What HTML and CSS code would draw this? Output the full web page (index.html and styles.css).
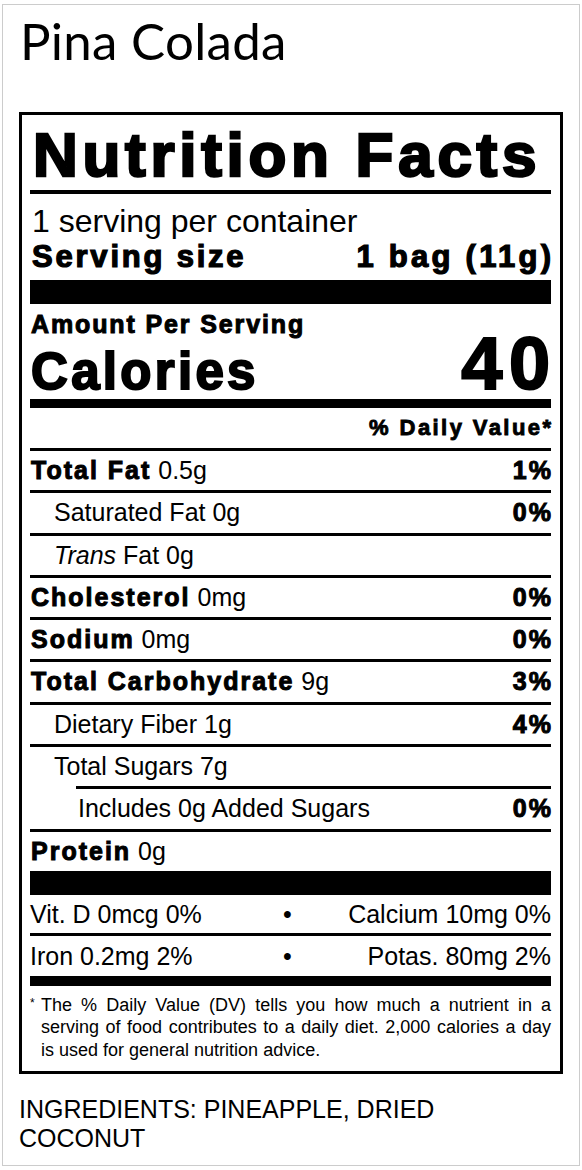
FILE: index.html
```html
<!DOCTYPE html>
<html lang="en">
<head>
    <meta charset="UTF-8">
    <meta name="viewport" content="width=device-width, initial-scale=1.0">
    <title>Pina Colada - Nutrition Facts</title>
    <link rel="stylesheet" href="styles.css">
</head>
<body>

    <div class="page">
        <h2 class="product-name">Pina Colada</h2>

        <div class="label">
            <h1 class="label-title hv">Nutrition Facts</h1>

            <div class="servings">
                <p class="servings-count">1 serving per container</p>
                <div class="serving-size hv">
                    <span>Serving size</span>
                    <span class="right">1 bag (11g)</span>
                </div>
            </div>

            <div class="calories-block">
                <p class="amount hv">Amount Per Serving</p>
                <div class="calories hv">
                    <span>Calories</span>
                    <span class="calories-value right">40</span>
                </div>
            </div>

            <div class="dv-header"><span class="hv right">% Daily Value*</span></div>

            <div class="row">
                <span><b class="hv">Total Fat</b> 0.5g</span>
                <b class="hv right">1%</b>
            </div>
            <div class="row sub">
                <span>Saturated Fat 0g</span>
                <b class="hv right">0%</b>
            </div>
            <div class="row sub">
                <span><i>Trans</i> Fat 0g</span>
            </div>
            <div class="row">
                <span><b class="hv">Cholesterol</b> 0mg</span>
                <b class="hv right">0%</b>
            </div>
            <div class="row">
                <span><b class="hv">Sodium</b> 0mg</span>
                <b class="hv right">0%</b>
            </div>
            <div class="row">
                <span><b class="hv">Total Carbohydrate</b> 9g</span>
                <b class="hv right">3%</b>
            </div>
            <div class="row sub">
                <span>Dietary Fiber 1g</span>
                <b class="hv right">4%</b>
            </div>
            <div class="row sub">
                <span>Total Sugars 7g</span>
            </div>
            <div class="row sub-2">
                <span>Includes 0g Added Sugars</span>
                <b class="hv right">0%</b>
            </div>
            <div class="row">
                <span><b class="hv">Protein</b> 0g</span>
            </div>

            <div class="bar-thick"></div>

            <div class="vit-row">
                <span>Vit. D 0mcg 0%</span>
                <span class="dot">•</span>
                <span class="vit-right">Calcium 10mg 0%</span>
            </div>
            <div class="vit-row iron">
                <span>Iron 0.2mg 2%</span>
                <span class="dot">•</span>
                <span class="vit-right">Potas. 80mg 2%</span>
            </div>

            <div class="bar-medium"></div>

            <div class="footnote">
                <span class="star">*</span>
                <p>The % Daily Value (DV) tells you how much a nutrient in a serving of food contributes to a daily diet. 2,000 calories a day is used for general nutrition advice.</p>
            </div>
        </div>

        <p class="ingredients">INGREDIENTS: PINEAPPLE, DRIED COCONUT</p>
    </div>

</body>
</html>
```

FILE: styles.css
```css
body {
    margin: 0;
    padding: 0;
    background-color: #fff;
    color: #000;
    font-family: "Liberation Sans", Arial, sans-serif;
}

.page {
    margin: 4px 2px 0;
    border: 1px solid #ccc;
    padding: 6px 16px 12px;
}

.product-name {
    font-family: Lato, sans-serif;
    font-weight: 400;
    font-size: 51px;
    line-height: 60px;
    letter-spacing: 0.3px;
    margin: 0 0 41px 1px;
}

/* the label itself */
.label {
    border: 3px solid #000;
    padding: 0 9px 0 8px;
}

/* heavy "black" text: bold + stroke + extra spacing */
.hv {
    font-weight: 700;
    -webkit-text-stroke: 0.04em #000;
    letter-spacing: 0.08em;
}

.hv.right,
.hv .right {
    margin-right: -0.08em;
}

.label-title {
    font-size: 62px;
    line-height: 70px;
    letter-spacing: 0.076em;
    margin: 0;
    padding: 5px 0 0 3px;
    border-bottom: 4px solid #000;
}

.servings {
    margin-top: 9px;
    padding-bottom: 5px;
    border-bottom: 24px solid #000;
}

.servings-count {
    margin: 0 0 0 2px;
    font-size: 32px;
    line-height: 36px;
}

.serving-size {
    display: flex;
    justify-content: space-between;
    padding-left: 2px;
    font-size: 31px;
    line-height: 36px;
    letter-spacing: 0.09em;
}

.serving-size .right {
    letter-spacing: 0.105em;
    margin-right: -0.105em;
}

.calories-block {
    margin-top: 5px;
    border-bottom: 9px solid #000;
}

.amount {
    margin: 0 0 0 1px;
    font-size: 25px;
    line-height: 30px;
    letter-spacing: 0.075em;
}

.calories {
    display: flex;
    justify-content: space-between;
    align-items: baseline;
    height: 60px;
    padding-left: 1px;
    font-size: 51px;
    line-height: 50px;
    letter-spacing: 0.065em;
}

.calories-value {
    font-size: 74px;
    letter-spacing: 0.09em;
}

.dv-header {
    text-align: right;
    font-size: 22px;
    line-height: 40px;
}

.dv-header .hv {
    letter-spacing: 0.11em;
    margin-right: -0.11em;
}

.row {
    display: flex;
    justify-content: space-between;
    border-top: 3px solid #000;
    padding-left: 1px;
    font-size: 25px;
    line-height: 39.3px;
}

.row b {
    font-size: 25px;
}

.row.sub {
    padding-left: 24px;
}

.row.sub-2 {
    margin-left: 46px;
    padding-left: 2px;
}

.bar-thick {
    height: 24px;
    background-color: #000;
}

.vit-row {
    display: grid;
    grid-template-columns: 1fr auto 1fr;
    font-size: 25px;
    line-height: 38px;
}

.vit-row.iron {
    border-top: 3px solid #000;
    line-height: 40px;
}

.dot {
    margin-right: 6px;
}

.vit-right {
    text-align: right;
}

.bar-medium {
    height: 10px;
    background-color: #000;
}

.footnote {
    display: flex;
    padding: 8px 0 10px;
    font-size: 18px;
    line-height: 22.5px;
}

.footnote .star {
    width: 11px;
    font-size: 12px;
    line-height: 18px;
    flex-shrink: 0;
}

.footnote p {
    margin: 0;
    flex: 1;
    text-align: justify;
}

.ingredients {
    margin: 21px 0 0;
    font-size: 25px;
    line-height: 29px;
}
```
